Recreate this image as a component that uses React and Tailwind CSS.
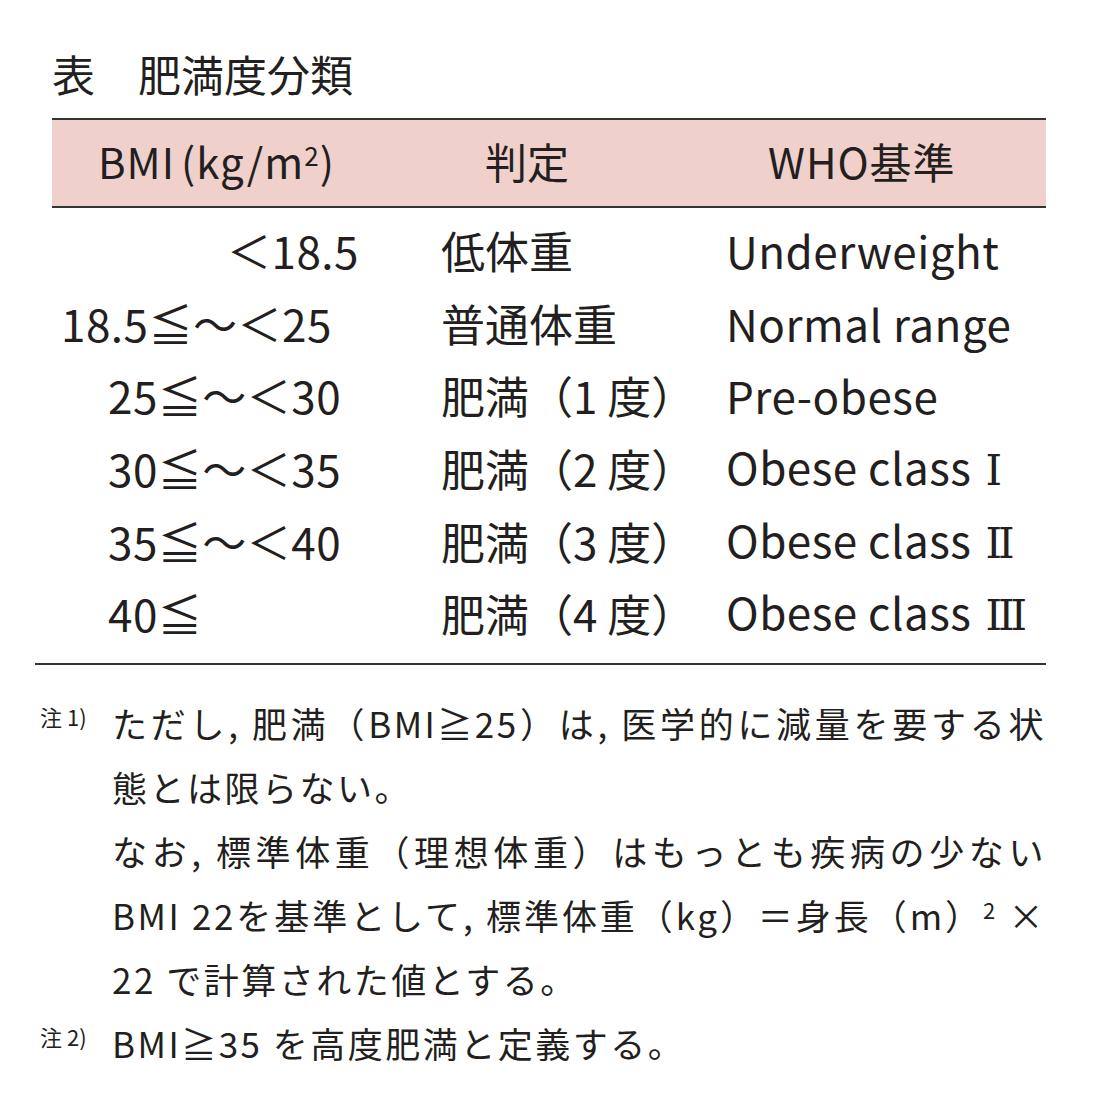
import React from 'react';

const font = { fontFamily: '"Noto Sans CJK JP", "Noto Sans", sans-serif' };

const rows = [
    { bmi: '＜18.5', pad: 'pl-[192px]', judge: '低体重', who: 'Underweight' },
    { bmi: '18.5≦〜＜25', pad: 'pl-[26px]', judge: '普通体重', who: 'Normal range' },
    { bmi: '25≦〜＜30', pad: 'pl-[73px]', judge: '肥満（1 度）', who: 'Pre-obese' },
    { bmi: '30≦〜＜35', pad: 'pl-[73px]', judge: '肥満（2 度）', who: 'Obese class', num: 'I' },
    { bmi: '35≦〜＜40', pad: 'pl-[73px]', judge: '肥満（3 度）', who: 'Obese class', num: 'II' },
    { bmi: '40≦', pad: 'pl-[73px]', judge: '肥満（4 度）', who: 'Obese class', num: 'III' },
]

const App = () => {
    return (
        <div className="w-[1098px] h-[1114px] bg-white text-[#231f20] pt-[47px]" style={font}>
            {/* title */}
            <div className="ml-[52px] h-[71px] text-[43px] leading-[52px]">表　肥満度分類</div>

            {/* header */}
            <div className="ml-[52px] w-[994px] h-[90px] pb-[5px] border-y-2 border-[#333] bg-[#efd0cb] flex items-center text-[42px] whitespace-nowrap">
                <div className="w-[433px] pl-[46px] tracking-[1px]">BMI<span className="ml-[6px]">(kg/m<sup className="text-[26px]">2</sup>)</span></div>
                <div className="w-[283px]">判定</div>
                <div className="flex-1 tracking-[1px]">WHO基準</div>
            </div>

            {/* rows */}
            <div className="ml-[35px] w-[1011px] pt-[6px] pb-[13px] border-b-2 border-[#333]">
                {rows.map((r) => (
                    <div key={r.judge} className="h-[72.6px] flex items-center text-[44px] leading-none">
                        <div className={`w-[406px] ${r.pad} whitespace-nowrap tracking-[0.5px]`}>{r.bmi}</div>
                        <div className="w-[285px] whitespace-nowrap">{r.judge}</div>
                        <div className="flex-1 whitespace-nowrap tracking-[0.5px]">
                            {r.who}
                            {r.num && (
                                <span className="ml-[14px] text-[42px] tracking-[-4px]" style={{ fontFamily: '"DejaVu Serif", "Liberation Serif", serif' }}>{r.num}</span>
                            )}
                        </div>
                    </div>
                ))}
            </div>

            {/* notes */}
            <div className="mt-[26px] ml-[40px] w-[1006px] text-[35px] leading-[64px] tracking-[2.5px]">
                <div className="flex">
                    <div className="w-[72px] text-[22px] leading-[50px] tracking-normal whitespace-nowrap">注 1)</div>
                    <div className="flex-1">
                        <div className="text-justify [text-align-last:justify]">ただし, 肥満（BMI≧25）は, 医学的に減量を要する状</div>
                        <div>態とは限らない。</div>
                        <div className="text-justify [text-align-last:justify]">なお, 標準体重（理想体重）はもっとも疾病の少ない</div>
                        <div className="text-justify [text-align-last:justify]">BMI 22を基準として, 標準体重（kg）＝身長（m）<sup className="text-[22px]">2</sup> ×</div>
                        <div>22 で計算された値とする。</div>
                    </div>
                </div>
                <div className="flex">
                    <div className="w-[72px] text-[22px] leading-[50px] tracking-normal whitespace-nowrap">注 2)</div>
                    <div className="flex-1">BMI≧35 を高度肥満と定義する。</div>
                </div>
            </div>
        </div>
    );
};

export default App;
